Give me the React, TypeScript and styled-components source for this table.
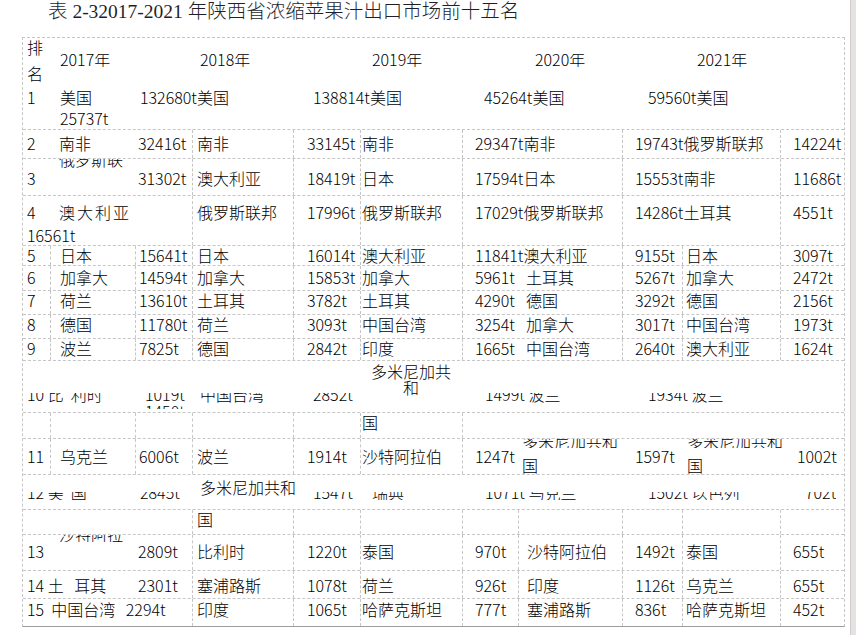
import React from 'react'
import styled, { createGlobalStyle } from 'styled-components'

// column widths of the export table (rank, then country / tonnage per year)
const COLS = [27, 85, 57, 101, 67, 102, 56, 104, 60, 98, 64]
const PL = [4, 9, 3, 4, 13, 1, 12, 8, 12, 3, 12]
const DASH = '1px dashed #c6c6c6'
const track = (cols: number[]) => cols.map((c) => `${c}px`).join(' ')

type Seg = [number, number, boolean]

const LAYOUT: Record<'A' | 'B' | 'C' | 'D', Seg[]> = {
  A: [[0, 1, false], [1, 1, false], [2, 1, false], [3, 1, true], [4, 1, true], [5, 1, true], [6, 2, true], [8, 2, true], [10, 1, true]],
  B: [[0, 1, false], [1, 1, true], [2, 1, true], [3, 1, true], [4, 1, true], [5, 1, true], [6, 1, true], [7, 1, false], [8, 1, true], [9, 1, true], [10, 1, true]],
  C: [[0, 1, false], [1, 1, true], [2, 1, true], [3, 1, true], [4, 1, true], [5, 1, true], [6, 5, true]],
  D: [[0, 1, false], [1, 1, false], [2, 1, false], [3, 1, true], [4, 1, true], [5, 1, true], [6, 1, true], [7, 1, true], [8, 1, true], [9, 1, true], [10, 1, true]],
}

const GlobalStyle = createGlobalStyle`
  * { box-sizing: border-box; }
  body {
    margin: 0;
    background: #fff;
    color: #000;
    font-family: 'Noto Sans CJK SC', 'Liberation Sans', sans-serif;
  }
`

const Page = styled.div`
  display: flex;
  width: 856px;
  height: 635px;
  overflow: hidden;
`

const Sheet = styled.div`
  flex: 1;
  padding-left: 22px;
`

const Edge = styled.div`
  width: 6px;
  background: #e5e2e2;
  border-left: 1px solid #d2cdcd;
`

const Title = styled.h1`
  margin: 0 0 13px 26px;
  font: 300 19.5px/24px 'Liberation Serif', 'Noto Sans CJK SC', serif;
  color: #1f1f2c;
  white-space: nowrap;
`

const Table = styled.div`
  width: 823px;
  border: ${DASH};
  border-bottom: 1px solid #9c9c9c;
  font-size: 16px;
  font-weight: 300;
  line-height: 18px;
`

const Row = styled.div<{ $h: number; $pt?: number }>`
  display: grid;
  grid-template-columns: ${track(COLS)};
  height: ${(p) => p.$h}px;
  --pt: ${(p) => p.$pt ?? 0}px;

  & + & {
    border-top: ${DASH};
  }
`

const Band = styled.div<{ $h?: number; $pt?: number; $cols?: number[] }>`
  display: grid;
  grid-template-columns: ${(p) => track(p.$cols ?? COLS)};
  height: ${(p) => (p.$h ? `${p.$h}px` : 'auto')};
  --pt: ${(p) => p.$pt ?? 0}px;
`

const Cell = styled.div<{ $span?: number; $line?: boolean; $pl?: number }>`
  grid-column: span ${(p) => p.$span ?? 1};
  border-left: ${(p) => (p.$line ? DASH : 'none')};
  padding: var(--pt) 0 0 ${(p) => p.$pl ?? 0}px;
  white-space: pre;
  min-width: 0;
`

// a line of text of which only a slice shows (the print export cut it)
const Clip = styled.div<{ $h: number; $off: number; $mt?: number }>`
  width: max-content;
  height: ${(p) => p.$h}px;
  margin-top: ${(p) => p.$mt ?? 0}px;
  overflow: hidden;

  & > span {
    display: block;
    margin-top: ${(p) => -p.$off}px;
  }
`

const Line = styled.div<{ $mt?: number }>`
  margin-top: ${(p) => p.$mt ?? 0}px;
`

const Stack = styled.div`
  margin-top: -4px;
  line-height: 26px;
`

const Wrap = styled.div`
  padding-top: 2px;
  line-height: 16px;
  text-align: center;
`

const Spread = styled.span`
  letter-spacing: 2px;
`

const Year = ({ children }: { children: string }) => (
  <Clip $h={13} $off={4} $mt={16}>
    <span>{children}</span>
  </Clip>
)

const Cut = ({ children, h = 10, off = 8, mt = 0 }: { children: string; h?: number; off?: number; mt?: number }) => (
  <Clip $h={h} $off={off} $mt={mt}>
    <span>{children}</span>
  </Clip>
)

const DataRow = ({
  h,
  pt,
  layout,
  cells,
}: {
  h: number
  pt: number
  layout: keyof typeof LAYOUT
  cells: React.ReactNode[]
}) => (
  <Row $h={h} $pt={pt}>
    {LAYOUT[layout].map(([start, span, line], i) => (
      <Cell key={i} $span={span} $line={line} $pl={PL[start]}>
        {cells[i]}
      </Cell>
    ))}
  </Row>
)

const FIVE_ROWS: { h: number; pt: number; cells: string[] }[] = [
  { h: 20, pt: 0, cells: ['5', '日本', '15641t', '日本', '16014t', '澳大利亚', '11841t澳大利亚', '', '9155t', '日本', '3097t'] },
  { h: 25, pt: 2, cells: ['6', '加拿大', '14594t', '加拿大', '15853t', '加拿大', '5961t', '土耳其', '5267t', '加拿大', '2472t'] },
  { h: 24, pt: 0, cells: ['7', '荷兰', '13610t', '土耳其', '3782t', '土耳其', '4290t', '德国', '3292t', '德国', '2156t'] },
  { h: 24, pt: 0, cells: ['8', '德国', '11780t', '荷兰', '3093t', '中国台湾', '3254t', '加拿大', '3017t', '中国台湾', '1973t'] },
  { h: 22, pt: 0, cells: ['9', '波兰', '7825t', '德国', '2842t', '印度', '1665t', '中国台湾', '2640t', '澳大利亚', '1624t'] },
]

const TAIL_ROWS: { h: number; pt: number; cells: React.ReactNode[] }[] = [
  {
    h: 36,
    pt: 7,
    cells: ['13', <Cut h={7} off={10} mt={-7}>沙特阿拉</Cut>, '2809t', '比利时', '1220t', '泰国', '970t', '沙特阿拉伯', '1492t', '泰国', '655t'],
  },
  { h: 28, pt: 5, cells: ['14 土   耳其', '', '2301t', '塞浦路斯', '1078t', '荷兰', '926t', '印度', '1126t', '乌克兰', '655t'] },
  { h: 28, pt: 1, cells: ['15  中国台湾   2294t', '', '', '印度', '1065t', '哈萨克斯坦', '777t', '塞浦路斯', '836t', '哈萨克斯坦', '452t'] },
]

const Dominica = () => (
  <>
    <Cut h={9} off={7} mt={-8}>多米尼加共和</Cut>
    <Line $mt={8}>国</Line>
  </>
)

export default function App() {
  return (
    <Page>
      <GlobalStyle />
      <Sheet>
        <Title>表 2-32017-2021 年陕西省浓缩苹果汁出口市场前十五名</Title>
        <Table>
          <Row $h={91}>
            <Cell $span={11}>
              <Band $h={48}>
                <Cell $pl={4}>
                  <Stack>
                    排<br />名
                  </Stack>
                </Cell>
                <Cell $span={2} $pl={10}><Year>2017年</Year></Cell>
                <Cell $span={2} $pl={8}><Year>2018年</Year></Cell>
                <Cell $span={2} $pl={12}><Year>2019年</Year></Cell>
                <Cell $span={2} $pl={17}><Year>2020年</Year></Cell>
                <Cell $span={2} $pl={15}><Year>2021年</Year></Cell>
              </Band>
              <Band $pt={2}>
                <Cell $pl={4}>1</Cell>
                <Cell $pl={10}>
                  美国
                  <Line $mt={3}>25737t</Line>
                </Cell>
                <Cell $span={2} $pl={5}>132680t美国</Cell>
                <Cell $span={2} $pl={20}>138814t美国</Cell>
                <Cell $span={2} $pl={22}>45264t美国</Cell>
                <Cell $span={3} $pl={26}>59560t美国</Cell>
              </Band>
            </Cell>
          </Row>

          <DataRow h={29} pt={4} layout="A" cells={['2', '南非', '32416t', '南非', '33145t', '南非', '29347t南非', '19743t俄罗斯联邦', '14224t']} />
          <DataRow
            h={37}
            pt={10}
            layout="A"
            cells={['3', <Cut h={9} off={9} mt={-10}>俄罗斯联</Cut>, '31302t', '澳大利亚', '18419t', '日本', '17594t日本', '15553t南非', '11686t']}
          />
          <DataRow
            h={50}
            pt={7}
            layout="A"
            cells={[
              <>
                4<Line $mt={5}>16561t</Line>
              </>,
              <Spread>澳大利亚</Spread>,
              '',
              '俄罗斯联邦',
              '17996t',
              '俄罗斯联邦',
              '17029t俄罗斯联邦',
              '14286t土耳其',
              '4551t',
            ]}
          />
          {FIVE_ROWS.map((r) => (
            <DataRow key={r.cells[0]} h={r.h} pt={r.pt} layout="B" cells={r.cells} />
          ))}

          <Row $h={52}>
            <Cell $span={11}>
              <Band $h={32}>
                <Cell $span={5} />
                <Cell>
                  <Wrap>
                    多米尼加共<br />和
                  </Wrap>
                </Cell>
              </Band>
              <Band>
                <Cell $pl={4}><Cut>{'10 比  利时'}</Cut></Cell>
                <Cell />
                <Cell $pl={10}>
                  <Cut>1019t</Cut>
                  <Cut h={6} off={1}>1450t</Cut>
                </Cell>
                <Cell $pl={8}><Cut>中国台湾</Cut></Cell>
                <Cell $span={2} $pl={20}><Cut>2852t</Cut></Cell>
                <Cell $span={2} $pl={23}><Cut>1499t 波兰</Cut></Cell>
                <Cell $span={3} $pl={26}><Cut>1934t 波兰</Cut></Cell>
              </Band>
            </Cell>
          </Row>
          <DataRow h={26} pt={0} layout="C" cells={['', '', '', '', '', '国', '']} />
          <DataRow
            h={36}
            pt={8}
            layout="C"
            cells={[
              '11',
              '乌克兰',
              '6006t',
              '波兰',
              '1914t',
              '沙特阿拉伯',
              <Band $pt={0} $cols={[44, 104, 60, 98, 63]}>
                <Cell>1247t</Cell>
                <Cell $pl={3}><Dominica /></Cell>
                <Cell $pl={12}>1597t</Cell>
                <Cell $pl={4}><Dominica /></Cell>
                <Cell $pl={16}>1002t</Cell>
              </Band>,
            ]}
          />

          <Row $h={35}>
            <Cell $span={11}>
              <Band>
                <Cell $span={2} $pl={4}><Cut h={8} off={9} mt={17}>{'12 美  国  *'}</Cut></Cell>
                <Cell $pl={5}><Cut h={8} off={9} mt={17}>2845t</Cut></Cell>
                <Cell $pl={8}><Line $mt={3}>多米尼加共和</Line></Cell>
                <Cell $pl={20}><Cut h={8} off={9} mt={17}>1547t</Cut></Cell>
                <Cell $pl={12}><Cut h={8} off={9} mt={17}>瑞典</Cut></Cell>
                <Cell $span={2} $pl={23}><Cut h={8} off={9} mt={17}>1071t 乌克兰</Cut></Cell>
                <Cell $span={2} $pl={26}><Cut h={8} off={9} mt={17}>1502t 以色列</Cut></Cell>
                <Cell $pl={25}><Cut h={8} off={9} mt={17}>702t</Cut></Cell>
              </Band>
            </Cell>
          </Row>
          <DataRow h={25} pt={0} layout="D" cells={['', '', '', '国']} />
          {TAIL_ROWS.map((r, i) => (
            <DataRow key={i} h={r.h} pt={r.pt} layout="D" cells={r.cells} />
          ))}
        </Table>
      </Sheet>
      <Edge />
    </Page>
  )
}
